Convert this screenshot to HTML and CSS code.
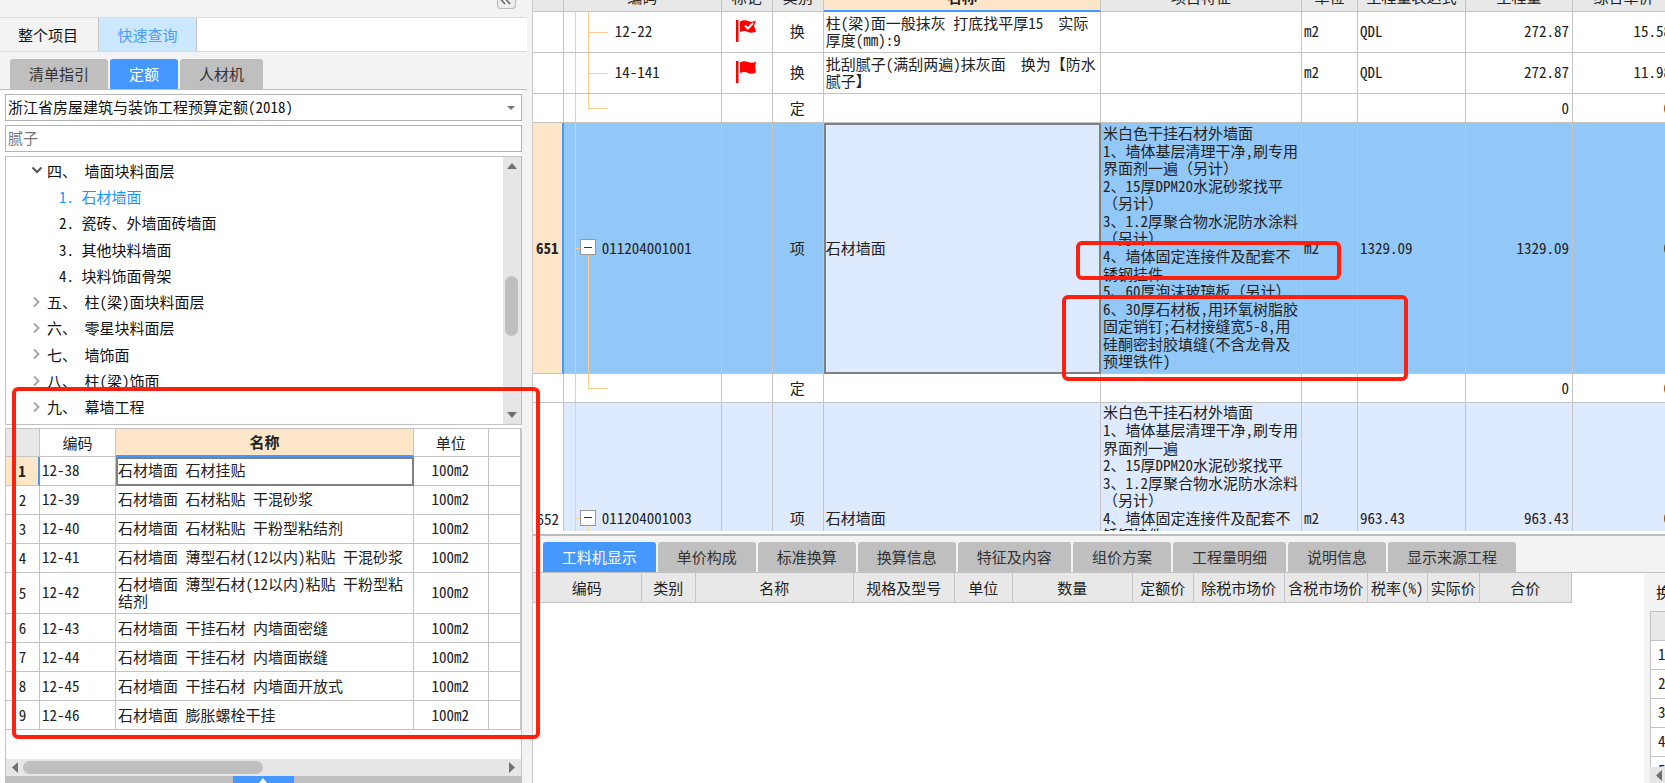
FILE: index.html
```html
<!DOCTYPE html>
<html lang="zh-CN">
<head>
<meta charset="utf-8">
<title>工程预算</title>
<link rel="stylesheet" href="styles.css">
</head>
<body>
<div class="app">
  <aside class="side">
    <div class="side-top">
      <button class="collapse" type="button" aria-label="收起">
        <svg width="12" height="10" viewBox="0 0 12 10" fill="none" stroke="#666" stroke-width="1.5"><path d="M5 1 1.500 5 5 9M10 1 6.500 5 10 9"/></svg>
      </button>
    </div>
    <nav class="views">
      <button type="button" class="view">整个项目</button>
      <button type="button" class="view view-on">快速查询</button>
    </nav>
    <nav class="tabs side-tabs">
      <button type="button" class="tab">清单指引</button>
      <button type="button" class="tab tab-on">定额</button>
      <button type="button" class="tab">人材机</button>
    </nav>
    <div class="side-body">
      <div class="combo">
        <select class="field" aria-label="定额库"><option>浙江省房屋建筑与装饰工程预算定额(2018)</option></select>
        <svg class="combo-arrow" width="8" height="4" viewBox="0 0 8 4"><path d="M0 0h8L4 4z" fill="#777"/></svg>
      </div>
      <input class="field" type="text" placeholder="腻子" aria-label="查询">
      <div class="tree">
        <ul class="tree-list">
          <li class="node"><svg class="chev open" width="12" height="12" viewBox="0 0 12 12"><path d="M1.500 3.500 6 8l4.500-4.500"/></svg>四、 墙面块料面层</li>
          <li class="node leaf leaf-on">1. 石材墙面</li>
          <li class="node leaf">2. 瓷砖、外墙面砖墙面</li>
          <li class="node leaf">3. 其他块料墙面</li>
          <li class="node leaf">4. 块料饰面骨架</li>
          <li class="node"><svg class="chev" width="12" height="12" viewBox="0 0 12 12"><path d="M3 1.500 7.500 6 3 10.500"/></svg>五、 柱(梁)面块料面层</li>
          <li class="node"><svg class="chev" width="12" height="12" viewBox="0 0 12 12"><path d="M3 1.500 7.500 6 3 10.500"/></svg>六、 零星块料面层</li>
          <li class="node"><svg class="chev" width="12" height="12" viewBox="0 0 12 12"><path d="M3 1.500 7.500 6 3 10.500"/></svg>七、 墙饰面</li>
          <li class="node"><svg class="chev" width="12" height="12" viewBox="0 0 12 12"><path d="M3 1.500 7.500 6 3 10.500"/></svg>八、 柱(梁)饰面</li>
          <li class="node"><svg class="chev" width="12" height="12" viewBox="0 0 12 12"><path d="M3 1.500 7.500 6 3 10.500"/></svg>九、 幕墙工程</li>
        </ul>
        <div class="vbar">
          <svg width="10" height="6" viewBox="0 0 10 6"><path d="M0 6h10L5 0z" fill="#6f7073"/></svg>
          <div class="vthumb"></div>
          <svg width="10" height="6" viewBox="0 0 10 6"><path d="M0 0h10L5 6z" fill="#6f7073"/></svg>
        </div>
      </div>
      <div class="quota">
        <table class="grid quota-grid">
          <colgroup><col class="q-no"><col class="q-code"><col><col class="q-unit"><col class="q-end"></colgroup>
          <thead><tr><th class="corner"></th><th>编码</th><th class="th-on">名称</th><th>单位</th><th></th></tr></thead>
          <tbody>
            <tr><th class="no-on">1</th><td>12-38</td><td class="cell-on">石材墙面 石材挂贴</td><td class="mid">100m2</td><td></td></tr>
            <tr><th>2</th><td>12-39</td><td>石材墙面 石材粘贴 干混砂浆</td><td class="mid">100m2</td><td></td></tr>
            <tr><th>3</th><td>12-40</td><td>石材墙面 石材粘贴 干粉型粘结剂</td><td class="mid">100m2</td><td></td></tr>
            <tr><th>4</th><td>12-41</td><td>石材墙面 薄型石材(12以内)粘贴 干混砂浆</td><td class="mid">100m2</td><td></td></tr>
            <tr class="two"><th>5</th><td>12-42</td><td>石材墙面 薄型石材(12以内)粘贴 干粉型粘结剂</td><td class="mid">100m2</td><td></td></tr>
            <tr><th>6</th><td>12-43</td><td>石材墙面 干挂石材 内墙面密缝</td><td class="mid">100m2</td><td></td></tr>
            <tr><th>7</th><td>12-44</td><td>石材墙面 干挂石材 内墙面嵌缝</td><td class="mid">100m2</td><td></td></tr>
            <tr><th>8</th><td>12-45</td><td>石材墙面 干挂石材 内墙面开放式</td><td class="mid">100m2</td><td></td></tr>
            <tr><th>9</th><td>12-46</td><td>石材墙面 膨胀螺栓干挂</td><td class="mid">100m2</td><td></td></tr>
          </tbody>
        </table>
        <div class="hbar">
          <svg width="6" height="11" viewBox="0 0 6 11"><path d="M6 0v11L0 5.500z" fill="#6f7073"/></svg>
          <div class="htrack"><div class="hthumb"></div></div>
          <svg width="6" height="11" viewBox="0 0 6 11"><path d="M0 0v11l6-5.500z" fill="#6f7073"/></svg>
        </div>
        <div class="dock">
          <button type="button" class="dock-btn" aria-label="展开"><svg width="8" height="5" viewBox="0 0 8 5"><path d="M0 5h8L4 0z" fill="#fff"/></svg></button>
        </div>
      </div>
    </div>
  </aside>

  <main class="main">
    <section class="bill">
      <table class="grid bill-grid">
        <colgroup><col class="b-no"><col class="b-code"><col class="b-mark"><col class="b-kind"><col><col class="b-desc"><col class="b-unit"><col class="b-expr"><col class="b-qty"><col class="b-price"></colgroup>
        <thead><tr><th></th><th>编码</th><th>标记</th><th>类别</th><th class="th-on">名称</th><th>项目特征</th><th>单位</th><th>工程量表达式</th><th>工程量</th><th>综合单价</th></tr></thead>
        <tbody>
          <tr class="r-two"><th></th><td class="code child">12-22</td>
            <td class="mid"><svg width="20" height="22" viewBox="0 0 20 22"><path d="M0 0h2.500v22H0z" fill="#f00"/><path d="M4 1.500C7-.3 10 0 12 1s5 1 8-.5l-2 5.500 2 5.500c-3 1.500-6 1.500-8 .5s-5-1.500-8 0z" fill="#f00"/><path d="m9 5.500 3 3 5-5.500" fill="none" stroke="#fff" stroke-width="2"/></svg></td>
            <td class="mid">换</td><td>柱(梁)面一般抹灰 打底找平厚15&nbsp; 实际厚度(mm):9</td><td></td><td>m2</td><td>QDL</td><td class="num">272.87</td><td class="num">15.58</td></tr>
          <tr class="r-two"><th></th><td class="code child">14-141</td>
            <td class="mid"><svg width="20" height="22" viewBox="0 0 20 22"><path d="M0 0h2.500v22H0z" fill="#f00"/><path d="M4 1.500C7-.3 10 0 12 1s5 1 8-.5l-1 5.500 1 5.500c-3 1.500-6 1.500-8 .5s-5-1.500-8 0z" fill="#f00"/></svg></td>
            <td class="mid">换</td><td>批刮腻子(满刮两遍)抹灰面&nbsp; 换为【防水腻子】</td><td></td><td>m2</td><td>QDL</td><td class="num">272.87</td><td class="num">11.98</td></tr>
          <tr><th></th><td class="code child last"></td><td></td><td class="mid">定</td><td></td><td></td><td></td><td></td><td class="num">0</td><td class="num">0</td></tr>
          <tr class="r-sel"><th class="no-on">651</th><td class="code parent"><span class="item"><button type="button" class="fold" aria-label="折叠"></button>011204001001</span></td><td></td><td class="mid">项</td><td class="cell-on">石材墙面</td>
            <td class="desc">米白色干挂石材外墙面<br>1、墙体基层清理干净,刷专用界面剂一遍（另计）<br>2、15厚DPM20水泥砂浆找平<br>（另计）<br>3、1.2厚聚合物水泥防水涂料<br>（另计）<br>4、墙体固定连接件及配套不锈钢挂件<br>5、60厚泡沫玻璃板（另计）<br>6、30厚石材板,用环氧树脂胶固定销钉;石材接缝宽5-8,用<br>硅酮密封胶填缝(不含龙骨及预埋铁件)</td>
            <td>m2</td><td>1329.09</td><td class="num">1329.09</td><td class="num">0</td></tr>
          <tr><th></th><td class="code child last"></td><td></td><td class="mid">定</td><td></td><td></td><td></td><td></td><td class="num">0</td><td class="num">0</td></tr>
          <tr class="r-alt"><th>652</th><td class="code parent"><span class="item"><button type="button" class="fold" aria-label="折叠"></button>011204001003</span></td><td></td><td class="mid">项</td><td>石材墙面</td>
            <td class="desc">米白色干挂石材外墙面<br>1、墙体基层清理干净,刷专用界面剂一遍<br>2、15厚DPM20水泥砂浆找平<br>3、1.2厚聚合物水泥防水涂料<br>（另计）<br>4、墙体固定连接件及配套不锈钢挂件<br>5、60厚泡沫玻璃板（另计）<br>6、30厚石材板,用环氧树脂胶固定销钉;石材接缝宽5-8,用<br>硅酮密封胶填缝(不含龙骨及预埋铁件)</td>
            <td>m2</td><td>963.43</td><td class="num">963.43</td><td class="num">0</td></tr>
        </tbody>
      </table>
    </section>
    <section class="detail">
      <nav class="tabs detail-tabs">
        <button type="button" class="tab tab-on">工料机显示</button>
        <button type="button" class="tab">单价构成</button>
        <button type="button" class="tab">标准换算</button>
        <button type="button" class="tab">换算信息</button>
        <button type="button" class="tab">特征及内容</button>
        <button type="button" class="tab">组价方案</button>
        <button type="button" class="tab">工程量明细</button>
        <button type="button" class="tab">说明信息</button>
        <button type="button" class="tab">显示来源工程</button>
      </nav>
      <div class="detail-body">
        <div class="res">
          <table class="grid res-grid">
            <colgroup><col class="w109"><col class="w54"><col class="w158"><col class="w101"><col class="w58"><col class="w120"><col class="w61"><col class="w91"><col class="w83"><col class="w60"><col class="w52"><col class="w92"></colgroup>
            <thead><tr><th>编码</th><th>类别</th><th>名称</th><th>规格及型号</th><th>单位</th><th>数量</th><th>定额价</th><th>除税市场价</th><th>含税市场价</th><th>税率(%)</th><th>实际价</th><th>合价</th></tr></thead>
          </table>
        </div>
        <aside class="conv">
          <div class="conv-title">换算列表</div>
          <div class="conv-list">
            <table class="grid conv-grid">
              <thead><tr><th></th></tr></thead>
              <tbody><tr><td>1</td></tr><tr><td>2</td></tr><tr><td>3</td></tr><tr><td>4</td></tr><tr><td>5</td></tr></tbody>
            </table>
          </div>
          <div class="conv-bar"><svg width="6" height="11" viewBox="0 0 6 11"><path d="M6 0v11L0 5.500z" fill="#6f7073"/></svg></div>
        </aside>
      </div>
    </section>
  </main>

  <div class="mark mark-quota"></div>
  <div class="mark mark-four"></div>
  <div class="mark mark-six"></div>
</div>
</body>
</html>
```

FILE: styles.css
```css
* { box-sizing: border-box; }

body {
  margin: 0;
  background: #fff;
  color: #222;
  font: 15px/17px "Noto Sans Mono CJK SC", "Noto Sans CJK SC", monospace;
  text-spacing-trim: space-all;
}

button, input, select { font: inherit; color: inherit; }
button { border: 0; padding: 0; }
svg { display: block; flex: none; }

.app {
  position: relative;
  display: flex;
  height: 100vh;
  overflow: hidden;
}

/* left pane */
.side {
  flex: 0 0 32%;
  display: flex;
  flex-direction: column;
  min-width: 0;
  padding-right: 5px;
  background: #f3f3f3;
  border-right: 1px solid #c8c8c8;
}

.side-top {
  display: flex;
  justify-content: flex-end;
  height: 18px;
  padding-right: 11px;
  border-bottom: 1px solid #dcdcdc;
}

.collapse {
  display: flex;
  align-items: flex-start;
  justify-content: center;
  width: 19px;
  height: 9px;
  background: #ececec;
  border: 1px solid #b8b8b8;
  border-top: 0;
  border-radius: 0 0 4px 4px;
  overflow: hidden;
}
.collapse svg { margin-top: -5px; }

.views {
  display: flex;
  height: 34px;
  background: #fff;
  border-bottom: 1px solid #dcdcdc;
}

.view {
  width: 98px;
  padding-right: 2px;
  background: #f3f3f3;
  color: #111;
}
.view-on {
  width: 99px;
  padding: 0;
  background: #cce8ff;
  border: solid #c4c4c4;
  border-width: 0 1px;
  color: #4a9cff;
}

.tabs {
  display: flex;
  gap: 2px;
  border-bottom: 1px solid #c0c0c0;
}
.tab {
  height: 30px;
  padding: 0 19px 2px;
  background: #bfbfbf;
  border-radius: 3px 3px 0 0;
  color: #333;
  white-space: nowrap;
}
.tab-on {
  background: #4598ff;
  color: #fff;
  font-weight: 500;
}
.side-tabs { padding: 7px 0 0 10px; }

.side-body {
  flex: 1;
  display: flex;
  flex-direction: column;
  gap: 4px;
  min-height: 0;
  margin-right: 5px;
  padding: 4px 0 0 5px;
  background: #fff;
}

.combo { display: grid; align-items: center; }
.combo > * { grid-area: 1 / 1; }
.combo-arrow {
  justify-self: end;
  margin-right: 7px;
  pointer-events: none;
}

.field {
  appearance: none;
  width: 100%;
  height: 27px;
  padding: 0 2px 2px;
  background: #fff;
  border: 1px solid #b4b4b4;
  border-radius: 0;
  color: #111;
}
.field::placeholder { color: #777; opacity: 1; }

.tree {
  display: flex;
  height: 269px;
  border: 1px solid #c0c0c0;
}
.tree-list {
  flex: 1;
  display: flex;
  flex-direction: column;
  margin: 0;
  padding: 0 0 4px 25px;
  list-style: none;
  color: #111;
}
.node {
  flex: 1;
  display: flex;
  align-items: center;
  gap: 4px;
  white-space: pre;
}
.leaf { padding-left: 28px; }
.leaf-on { color: #1a97ff; }
.chev { fill: none; stroke: #a8a8a8; stroke-width: 2; }
.chev.open { stroke: #555; }

.vbar {
  display: flex;
  flex-direction: column;
  align-items: center;
  width: 18px;
  padding: 6px 0;
  background: #e6e6e6;
}
.vthumb {
  width: 13px;
  height: 60px;
  margin: 107px 0 auto;
  background: #bfbfbf;
  border-radius: 7px;
}

/* grids */
.grid {
  border-collapse: separate;
  border-spacing: 0;
  table-layout: fixed;
}
.grid th, .grid td {
  height: 28px;
  padding: 0 3px 2px 2px;
  border: solid #c4c4c4;
  border-width: 0 1px 1px 0;
  font-weight: 400;
  text-align: left;
  overflow: hidden;
}
.grid th { padding: 0 0 1px; text-align: center; }
.grid .mid { text-align: center; }
.grid .mid svg { margin: 0 auto; }
.grid .num { text-align: right; }
.grid .th-on {
  background: #ffe6c8;
  border-bottom: 2px solid #4598ff;
  font-weight: 700;
}
.grid .no-on {
  background: #ffe6c8;
  border-right: 2px solid #4598ff;
  font-weight: 700;
}
.grid .cell-on {
  outline: 2px solid #808080;
  outline-offset: -2px;
}

.quota {
  flex: 1;
  display: flex;
  flex-direction: column;
  min-height: 0;
  margin-top: -1px;
  border: solid #c4c4c4;
  border-width: 1px 1px 0;
}
.quota-grid { width: 100%; height: 301px; }
.quota-grid .two td { height: 40px; }
.quota-grid .corner { background: #e8e8e8; }
.q-no { width: 34px; }
.q-code { width: 76px; }
.q-unit { width: 75px; }
.q-end { width: 32px; }

.hbar {
  display: flex;
  align-items: center;
  gap: 5px;
  height: 17px;
  margin-top: auto;
  padding: 0 6px;
  background: #e6e6e6;
}
.htrack { flex: 1; }
.hthumb {
  width: 50%;
  height: 13px;
  background: #bfbfbf;
  border-radius: 7px;
}
.dock {
  display: flex;
  justify-content: center;
  height: 7px;
  background: #bfbfbf;
}
.dock-btn {
  display: flex;
  justify-content: center;
  width: 61px;
  padding-top: 2px;
  background: #4598ff;
}

/* right pane */
.main {
  flex: 1;
  display: grid;
  grid-template-rows: 531fr 252fr;
  min-width: 0;
}

.bill { min-height: 0; overflow: hidden; }
/* list is scrolled part-way past its header and right edge */
.bill-grid { width: calc(100% + 10px); margin-top: -17px; }
.bill-grid th, .bill-grid td { height: 29px; }
.bill-grid thead th { background: #e8e8e8; }
.bill-grid thead .th-on { background: #ffe6c8; }
.bill-grid .r-two td { height: 41px; padding-bottom: 3px; }
.bill-grid .r-sel td { height: 251px; background-color: #92c8f8; }
.bill-grid .r-sel .cell-on { background-color: #deeaff; }
.bill-grid .r-alt td { height: 232px; background-color: #deeaff; }
.b-no { width: 31px; }
.b-code { width: 158px; }
.b-mark, .b-kind { width: 51px; }
.b-desc { width: 201px; }
.b-unit { width: 56px; }
.b-expr { width: 108px; }
.b-qty { width: 107px; }
.b-price { width: 102px; }

.bill-grid .desc { padding-right: 0; line-height: 1.17; }

.bill-grid .code {
  --wire: linear-gradient(#ffcc8c, #ffcc8c);
  background-image: var(--wire), var(--wire), var(--wire);
  background-repeat: no-repeat;
}
.bill-grid .child {
  padding-left: 51px;
  background-position: 11px 0, 24px 0, 24px 50%;
  background-size: 1px 100%, 1px 100%, 20px 1px;
}
.bill-grid .last { background-size: 1px 100%, 1px 50%, 20px 1px; }
.bill-grid .parent {
  padding-left: 16px;
  background-position: 11px 0, 24px 100%, 11px 50%;
  background-size: 1px 100%, 1px 50%, 6px 1px;
}
.item { display: flex; align-items: center; gap: 6px; }
.fold {
  flex: none;
  width: 16px;
  height: 16px;
  background: linear-gradient(#333, #333) center / 8px 1px no-repeat #fff;
  border: 1px solid #999;
}

.detail {
  display: flex;
  flex-direction: column;
  min-height: 0;
  padding-top: 3px;
}
.detail-tabs {
  padding: 6px 0 0 10px;
  background: #f3f3f3;
  border-top: 2px solid #bdbdbd;
}
.detail-body { flex: 1; display: flex; min-height: 0; }
.res { flex: 1; min-width: 0; overflow: hidden; }
.res-grid { width: 1039px; }
.res-grid th { height: 30px; background: #e8e8e8; white-space: nowrap; }
.w109 { width: 109px; }
.w54 { width: 54px; }
.w158 { width: 158px; }
.w101 { width: 101px; }
.w58 { width: 58px; }
.w120 { width: 120px; }
.w61 { width: 61px; }
.w91 { width: 91px; }
.w83 { width: 83px; }
.w60 { width: 60px; }
.w52 { width: 52px; }
.w92 { width: 92px; }

.conv {
  display: flex;
  flex-direction: column;
  width: 21px;
  padding-left: 6px;
  background: #f3f3f3;
  overflow: hidden;
}
.conv-title {
  height: 38px;
  padding: 10px 0 0 6px;
  color: #111;
  white-space: nowrap;
}
.conv-list {
  flex: 1;
  min-height: 0;
  background: #fff;
  border: solid #c0c0c0;
  border-width: 1px 0 0 1px;
  overflow: hidden;
}
.conv-grid { width: 40px; }
.conv-grid th, .conv-grid td { height: 29px; padding: 0 0 3px 7px; }
.conv-grid th { background: #e8e8e8; }
.conv-bar {
  display: flex;
  align-items: center;
  height: 16px;
  padding-left: 6px;
  background: #e6e6e6;
}

/* annotation frames lying over the window */
.mark {
  position: absolute;
  border: 4px solid #ff2010;
  border-radius: 6px;
  pointer-events: none;
}
.mark-quota { left: 12px; top: 387px; width: 528px; height: 352px; }
.mark-four { left: 1076px; top: 241px; width: 265px; height: 39px; }
.mark-six { left: 1062px; top: 295px; width: 346px; height: 86px; }
```
